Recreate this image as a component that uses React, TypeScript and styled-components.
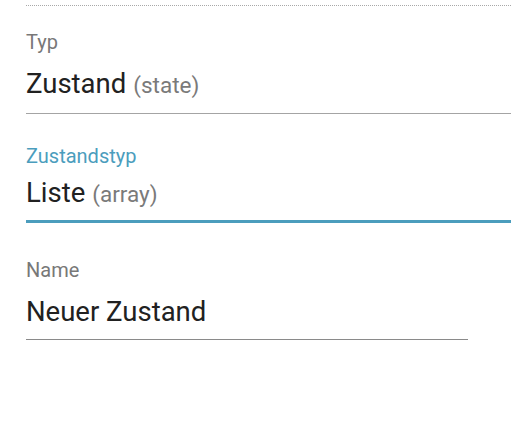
import React from "react";
import styled, { createGlobalStyle } from "styled-components";

const Global = createGlobalStyle`
  html, body { margin: 0; padding: 0; background: #ffffff; }
  body { font-family: Roboto, "Noto Sans", "Liberation Sans", sans-serif; }
`;

const Page = styled.div`
  width: 511px;
  height: 441px;
  overflow: hidden;
  padding: 5px 0 0 26px;
  box-sizing: border-box;
  display: flex;
  flex-direction: column;
`;

const Divider = styled.div`
  height: 0;
  border-top: 1px dotted #a8a8a8;
`;

const Field = styled.div<{ $top: number; $gap: number; $pad: number; $line: string; $lineW: number; $width?: number }>`
  margin-top: ${(p) => p.$top}px;
  width: ${(p) => (p.$width ? `${p.$width}px` : "auto")};
  display: flex;
  flex-direction: column;
  row-gap: ${(p) => p.$gap}px;
  padding-bottom: ${(p) => p.$pad}px;
  border-bottom: ${(p) => p.$lineW}px solid ${(p) => p.$line};
`;

const Label = styled.div<{ $focused?: boolean }>`
  font-size: 20px;
  line-height: 24px;
  height: 24px;
  color: ${(p) => (p.$focused ? "#4b9dbd" : "#787878")};
  white-space: nowrap;
`;

const Value = styled.div`
  font-size: 27.5px;
  line-height: 32px;
  height: 32px;
  color: #212121;
  white-space: nowrap;
`;

const Hint = styled.span`
  font-size: 22.5px;
  color: #7a7a7a;
  margin-left: 7px;
`;

export default function App() {
  return (
    <>
      <Global />
      <Page>
        <Divider />
        <Field $top={24} $gap={14} $pad={13} $line="#a4a4a4" $lineW={1}>
          <Label>Typ</Label>
          <Value>
            Zustand<Hint>(state)</Hint>
          </Value>
        </Field>
        <Field $top={30} $gap={9} $pad={11} $line="#4b9dbd" $lineW={3}>
          <Label $focused>Zustandstyp</Label>
          <Value>
            Liste<Hint>(array)</Hint>
          </Value>
        </Field>
        <Field $top={35} $gap={14} $pad={11} $line="#8a8a8a" $lineW={1} $width={442}>
          <Label>Name</Label>
          <Value>Neuer Zustand</Value>
        </Field>
      </Page>
    </>
  );
}
